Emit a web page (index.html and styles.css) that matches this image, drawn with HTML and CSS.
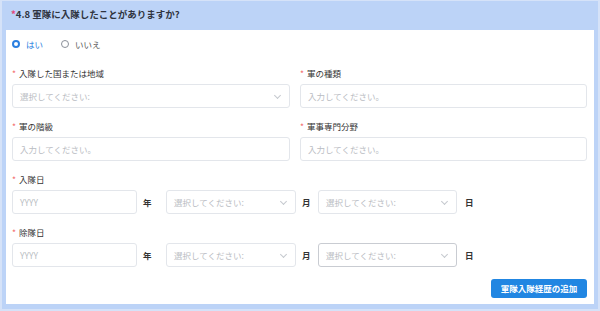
FILE: index.html
```html
<!DOCTYPE html>
<html lang="ja">
<head>
  <meta charset="UTF-8">
  <meta name="viewport" content="width=device-width, initial-scale=1.0">
  <title>軍隊入隊歴</title>
  <link rel="stylesheet" href="styles.css">
</head>
<body>
  <div class="question">
    <div class="question-title"><span class="req">*</span>4.8 軍隊に入隊したことがありますか?</div>

    <div class="panel">
      <div class="radio-group">
        <label class="radio checked"><span class="radio-dot"></span>はい</label>
        <label class="radio"><span class="radio-dot"></span>いいえ</label>
      </div>

      <div class="grid">
        <div class="field">
          <div class="label"><span class="star">*</span>入隊した国または地域</div>
          <div class="box select">選択してください:<span class="chevron"></span></div>
        </div>
        <div class="field">
          <div class="label"><span class="star">*</span>軍の種類</div>
          <div class="box">入力してください。</div>
        </div>
        <div class="field">
          <div class="label"><span class="star">*</span>軍の階級</div>
          <div class="box">入力してください。</div>
        </div>
        <div class="field">
          <div class="label"><span class="star">*</span>軍事専門分野</div>
          <div class="box">入力してください。</div>
        </div>
      </div>

      <div class="field">
        <div class="label"><span class="star">*</span>入隊日</div>
        <div class="date-row">
          <div class="box year">YYYY</div>
          <span class="unit unit-year">年</span>
          <div class="box select month">選択してください:<span class="chevron"></span></div>
          <span class="unit unit-month">月</span>
          <div class="box select day">選択してください:<span class="chevron"></span></div>
          <span class="unit unit-day">日</span>
        </div>
      </div>

      <div class="field">
        <div class="label"><span class="star">*</span>除隊日</div>
        <div class="date-row">
          <div class="box year">YYYY</div>
          <span class="unit unit-year">年</span>
          <div class="box select month">選択してください:<span class="chevron"></span></div>
          <span class="unit unit-month">月</span>
          <div class="box select day hover">選択してください:<span class="chevron"></span></div>
          <span class="unit unit-day">日</span>
        </div>
      </div>

      <div class="actions">
        <div class="add-button">軍隊入隊経歴の追加</div>
      </div>
    </div>
  </div>
</body>
</html>
```

FILE: styles.css
```css
* {
  box-sizing: border-box;
}

body {
  margin: 0;
  font-family: "Noto Sans CJK JP", "Noto Sans", sans-serif;
  color: #333;
  background-color: #fff;
}

.question {
  width: 600px;
  height: 311px;
  background-color: #bcd3f7;
  border: 2px solid #d5e2f8;
  border-top-width: 1px;
  padding: 0 4px 5px 4px;
}

.question-title {
  height: 29px;
  line-height: 27px;
  padding-left: 5px;
  font-size: 9.5px;
  font-weight: bold;
  color: #2f3440;
}

.req {
  color: #e6427a;
}

.panel {
  background-color: #fff;
  height: 274px;
  padding: 7px 7px 0 6px;
}

.radio-group {
  display: flex;
  height: 14px;
  align-items: center;
  font-size: 8.5px;
  margin-bottom: 16px;
}

.radio {
  display: flex;
  align-items: center;
  margin-right: 18px;
  color: #555;
}

.radio-dot {
  width: 8px;
  height: 8px;
  border-radius: 50%;
  border: 1px solid #8a8f99;
  margin-right: 6px;
}

.radio.checked {
  color: #2b7fe0;
}

.radio.checked .radio-dot {
  border: 2.5px solid #2b7fe0;
  background-color: #fff;
}

.grid {
  display: grid;
  grid-template-columns: 278px 1fr;
  column-gap: 10px;
}

.field {
  margin-bottom: 12px;
}

.label {
  height: 12px;
  line-height: 12px;
  font-size: 8.5px;
  margin-bottom: 5px;
  color: #333;
}

.star {
  color: #f36d6d;
  margin-right: 3px;
}

.box {
  position: relative;
  height: 24px;
  line-height: 22px;
  border: 1px solid #e3e6eb;
  border-radius: 3px;
  padding-left: 7px;
  font-size: 8.5px;
  color: #b9bcc2;
  background-color: #fff;
}

.chevron {
  position: absolute;
  right: 9px;
  top: 8px;
  width: 5px;
  height: 5px;
  border-right: 1px solid #c5c8ce;
  border-bottom: 1px solid #c5c8ce;
  transform: rotate(45deg);
}

.date-row {
  display: flex;
  align-items: center;
}

.year {
  width: 125px;
}

.month {
  width: 130px;
}

.day {
  width: 139px;
}

.day.hover {
  border-color: #c9ccd2;
}

.unit {
  font-size: 8.5px;
  font-weight: bold;
  color: #333;
  margin-left: 6px;
}

.unit-year {
  width: 23px;
}

.unit-month {
  width: 16px;
}

.unit-day {
  margin-left: 8px;
}

.actions {
  display: flex;
  justify-content: flex-end;
  margin-top: 0;
}

.add-button {
  width: 96px;
  height: 19px;
  line-height: 19px;
  text-align: center;
  font-size: 8.5px;
  font-weight: bold;
  color: #fff;
  background-color: #2186e2;
  border-radius: 3px;
}
```
